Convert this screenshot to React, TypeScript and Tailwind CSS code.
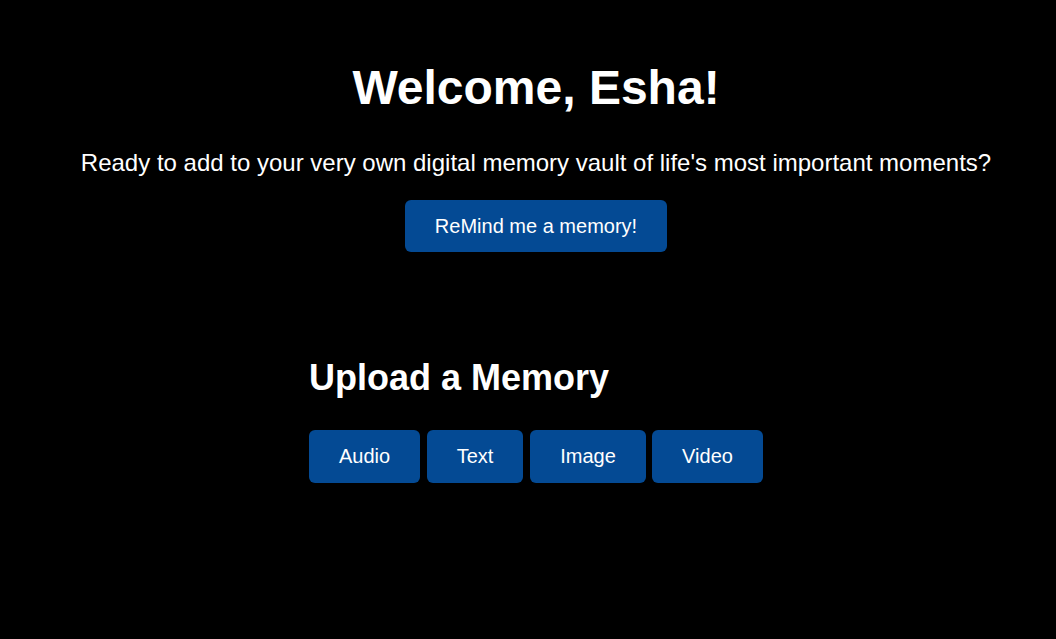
export default function App() {
  const btn =
    "bg-[#044a94] text-white text-[20px] leading-[23px] rounded-[6px] flex items-center justify-center h-[53px]";
  return (
    <div
      className="min-h-[639px] w-full bg-black text-white pl-4 flex flex-col items-center"
      style={{ fontFamily: '"Liberation Sans", Arial, sans-serif' }}
    >
      <h1 className="mt-[60px] text-[48px] leading-[55px] font-bold">Welcome, Esha!</h1>
      <p className="mt-[34px] text-[24px] leading-[28px]">
        Ready to add to your very own digital memory vault of life's most important moments?
      </p>
      <button className="bg-[#044a94] text-white text-[20px] leading-[23px] rounded-[6px] flex items-center justify-center mt-[23px] h-[52px] px-[30px]">
        ReMind me a memory!
      </button>
      <div className="mt-[105px] flex flex-col items-start">
        <h2 className="text-[36px] leading-[41px] font-bold">Upload a Memory</h2>
        <div className="mt-[32px] flex">
          <button className={`${btn} w-[111px]`}>Audio</button>
          <button className={`${btn} w-[96px] ml-[7px]`}>Text</button>
          <button className={`${btn} w-[116px] ml-[7px]`}>Image</button>
          <button className={`${btn} w-[111px] ml-[6px]`}>Video</button>
        </div>
      </div>
    </div>
  );
}
